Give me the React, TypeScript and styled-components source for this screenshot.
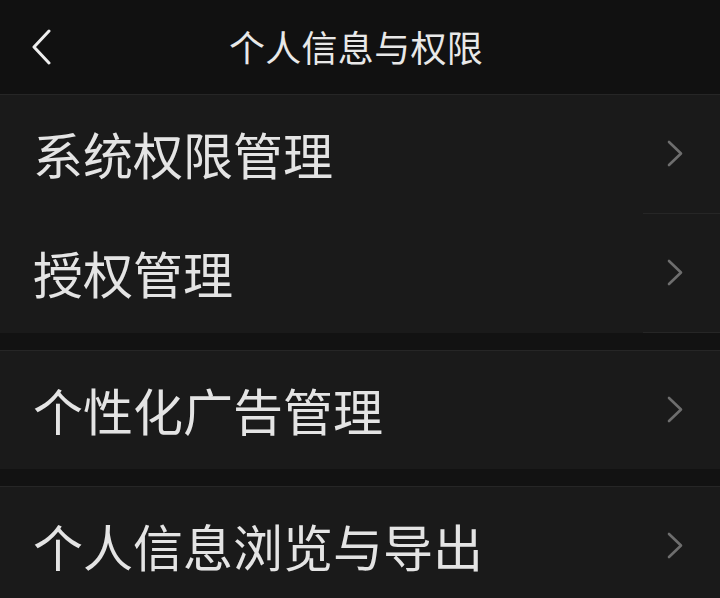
import styled, { createGlobalStyle } from 'styled-components'

const GlobalStyle = createGlobalStyle`
  html, body {
    margin: 0;
    padding: 0;
    background-color: #121212;
  }
  body {
    font-family: "Noto Sans CJK SC", "Noto Sans", sans-serif;
  }
`

const Page = styled.div`
  width: 720px;
  height: 598px;
  overflow: hidden;
  background-color: #121212;
  display: flex;
  flex-direction: column;
`

const Header = styled.header`
  height: 94px;
  flex-shrink: 0;
  display: grid;
  grid-template-columns: 90px 1fr 90px;
  align-items: center;
  background-color: #111111;
  border-bottom: 1px solid #262626;
`

const BackButton = styled.button`
  background: none;
  border: none;
  padding: 0 0 0 28px;
  height: 40px;
  display: flex;
  align-items: center;
  cursor: pointer;
`

const Title = styled.h1`
  margin: 0;
  padding: 0 8px 2px 0;
  text-align: center;
  font-size: 36px;
  font-weight: 400;
  color: #e8e8e8;
  letter-spacing: 0.3px;
  line-height: 1;
`

const Group = styled.section<{ $gap?: boolean }>`
  background-color: #1a1a1a;
  margin-top: ${p => (p.$gap ? '17px' : '0')};
  border-top: ${p => (p.$gap ? '1px solid #262626' : 'none')};
  display: flex;
  flex-direction: column;
  flex-shrink: 0;
`

const Row = styled.div`
  height: 118px;
  display: flex;
  align-items: center;
  justify-content: space-between;
  padding: 0 36px 0 33px;
  cursor: pointer;
`

const Label = styled.span`
  font-size: 50px;
  font-weight: 400;
  color: #e4e4e4;
  line-height: 1;
  padding-bottom: 2px;
`

const Divider = styled.div`
  height: 1px;
  margin-left: 643px;
  background-color: #262626;
`

function BackIcon() {
  return (
    <svg width="24" height="36" viewBox="0 0 24 36" fill="none">
      <polyline
        points="21,2 6,18 21,34"
        stroke="#eeeeee"
        strokeWidth="3"
        strokeLinecap="round"
        strokeLinejoin="round"
      />
    </svg>
  )
}

function Chevron() {
  return (
    <svg width="18" height="28" viewBox="0 0 18 28" fill="none">
      <polyline
        points="3,2 15,13.5 3,25"
        stroke="#6e6e6e"
        strokeWidth="2.6"
        strokeLinecap="round"
        strokeLinejoin="round"
      />
    </svg>
  )
}

type ItemProps = {
  label: string
}

function Item({ label }: ItemProps) {
  return (
    <Row>
      <Label>{label}</Label>
      <Chevron />
    </Row>
  )
}

function App() {
  return (
    <>
      <GlobalStyle />
      <Page>
        <Header>
          <BackButton aria-label="返回">
            <BackIcon />
          </BackButton>
          <Title>个人信息与权限</Title>
          <div />
        </Header>
        <Group>
          <Item label="系统权限管理" />
          <Divider />
          <Item label="授权管理" />
          <Divider />
        </Group>
        <Group $gap>
          <Item label="个性化广告管理" />
        </Group>
        <Group $gap>
          <Item label="个人信息浏览与导出" />
        </Group>
      </Page>
    </>
  )
}

export default App
